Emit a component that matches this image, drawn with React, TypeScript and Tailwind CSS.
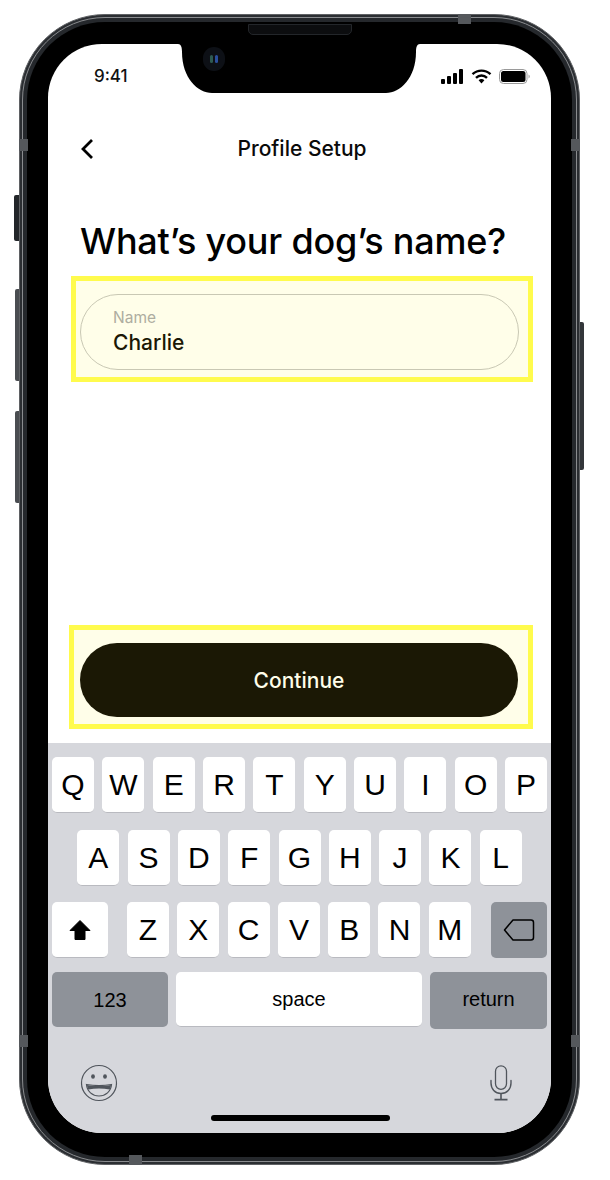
const FONT = "font-['Inter',sans-serif]";
const KEY_FONT = "font-['Liberation_Sans',Arial,sans-serif]";

const Key = ({ label }: { label: string }) => (
  <div className={`w-[42px] h-[56px] bg-white rounded-[5px] border-b border-[#b9bac0] flex items-center justify-center text-[30px] leading-none text-black ${KEY_FONT}`}>
    {label}
  </div>
);

const Tick = ({ className }: { className: string }) => (
  <div className={`absolute bg-[#55585c] ${className}`} />
);

const Notch = () => (
  <svg className="absolute left-[130px] top-0" width="242" height="50" viewBox="0 0 242 50">
    <path d="M0 0H242C239 0 238 3 238 8C238 34 222 49 208 49H34C20 49 4 34 4 8C4 3 3 0 0 0Z" fill="#000" />
  </svg>
);

const StatusIcons = () => (
  <div className="flex items-center gap-[7px]">
    <svg width="23" height="15" viewBox="0 0 23 15">
      <rect x="0" y="10" width="4" height="5" rx="1" fill="#000" />
      <rect x="6" y="7" width="4" height="8" rx="1" fill="#000" />
      <rect x="12" y="4" width="4" height="11" rx="1" fill="#000" />
      <rect x="18" y="0" width="4" height="15" rx="1" fill="#000" />
    </svg>
    <svg width="21" height="15" viewBox="0 0 21 15">
      <path d="M1.5 5.2C6.8 0.4 14.2 0.4 19.5 5.2" fill="none" stroke="#000" strokeWidth="2.4" />
      <path d="M5 8.8C8.2 5.8 12.8 5.8 16 8.8" fill="none" stroke="#000" strokeWidth="2.4" />
      <path d="M7.6 11.2C9.4 9.7 11.6 9.7 13.4 11.2L10.5 14.6Z" fill="#000" />
    </svg>
    <svg width="32" height="15" viewBox="0 0 32 15">
      <rect x="0.5" y="0.5" width="27.5" height="14" rx="4" fill="none" stroke="#9a9a9a" />
      <rect x="2" y="2" width="24.5" height="11" rx="2.5" fill="#000" />
      <path d="M29.5 5.5C30.6 6 30.8 6.7 30.8 7.5C30.8 8.3 30.6 9 29.5 9.5Z" fill="#a8a8a8" />
    </svg>
  </div>
);

const Emoji = () => (
  <svg width="38" height="38" viewBox="0 0 38 38">
    <circle cx="19" cy="19" r="17.5" fill="none" stroke="#50555c" strokeWidth="1.2" />
    <ellipse cx="13" cy="12.5" rx="1.9" ry="2.3" fill="#50555c" />
    <ellipse cx="25" cy="12.5" rx="1.9" ry="2.3" fill="#50555c" />
    <path d="M6.5 20.5C14 21.8 24 21.8 31.5 20.5C31 27.5 25.5 32 19 32C12.5 32 7 27.5 6.5 20.5Z" fill="#d6d7dc" stroke="#50555c" strokeWidth="1.2" />
    <path d="M7 21C14 22.2 24 22.2 31 21C30.8 23 30.3 24.4 29.6 25.5C23 24.2 15 24.2 8.4 25.5C7.7 24.4 7.2 23 7 21Z" fill="#50555c" />
  </svg>
);

const Mic = () => (
  <svg width="22" height="36" viewBox="0 0 22 36">
    <rect x="5.5" y="0.8" width="11" height="23.5" rx="5.5" fill="none" stroke="#50555c" strokeWidth="1.3" />
    <path d="M1 15.5V18C1 24 5 28.5 11 28.5C17 28.5 21 24 21 18V15.5" fill="none" stroke="#50555c" strokeWidth="1.4" strokeLinecap="round" />
    <path d="M11 28.5V34M4.5 34.6H17.5" fill="none" stroke="#50555c" strokeWidth="1.6" />
  </svg>
);

export default function App() {
  return (
    <div className="relative w-[610px] h-[1180px] bg-white pt-[14px] pl-[19px]">
      <div className="absolute left-[14px] top-[195px] w-[6px] h-[46px] rounded-l-[2px] bg-[#23262a]" />
      <div className="absolute left-[15px] top-[289px] w-[5px] h-[92px] rounded-l-[2px] bg-[#4a4d51]" />
      <div className="absolute left-[15px] top-[411px] w-[5px] h-[92px] rounded-l-[2px] bg-[#4a4d51]" />
      <div className="absolute left-[579px] top-[322px] w-[5px] h-[148px] rounded-r-[2px] bg-[#33363a]" />

      <div className="relative w-[561px] h-[1151px] rounded-[86px] border border-[#5f6164] bg-[#2b2e32] p-[2px]">
        <div className="w-full h-full rounded-[83px] border border-[#8a8c8f] bg-[#25282c] p-[4px]">
          <div className="w-full h-full rounded-[78px] bg-black pt-[22px] pl-[21px]">
            <div className={`relative w-[503px] h-[1089px] rounded-[54px] bg-white overflow-hidden flex flex-col ${FONT}`}>
              <Notch />
              <div className="absolute left-[155px] top-[3px] w-[22px] h-[24px] rounded-full bg-[#0d1016] flex items-center justify-center gap-[2px]">
                <span className="w-[3px] h-[8px] rounded-full bg-[#2e5a52]" />
                <span className="w-[3px] h-[8px] rounded-full bg-[#2b4f9e]" />
              </div>

              <div className="h-[48px] shrink-0 flex items-center justify-between pl-[46px] pr-[20px] pt-[16px]">
                <span className="text-[17px] font-medium text-[#111] leading-none">9:41</span>
                <StatusIcons />
              </div>

              <div className="relative h-[56px] mt-[28px] shrink-0 flex items-center justify-center pl-[5px]">
                <svg className="absolute left-[32px] top-[18px]" width="14" height="22" viewBox="0 0 14 22">
                  <path d="M12 2L3 11L12 20" fill="none" stroke="#000" strokeWidth="2.8" />
                </svg>
                <span className="text-[21px] font-medium text-[#0a0a0a] leading-none">Profile Setup</span>
              </div>

              <h1 className="mt-[43px] pl-[32px] text-[36px] tracking-[-0.2px] leading-[44px] font-medium text-black whitespace-nowrap">
                What’s your dog’s name?
              </h1>

              <div className="mt-[13px] ml-[23px] w-[462px] h-[106px] border-[5px] border-[#fffb4d] bg-[#fffee9] pl-[4px] pt-[13px]">
                <div className="w-[439px] h-[76px] rounded-full border border-[#c9c8b4] pl-[32px] pt-[2px] flex flex-col justify-center">
                  <span className="text-[15.5px] leading-[18px] text-[#aeada0]">Name</span>
                  <span className="mt-[2px] text-[21px] leading-[28px] font-medium text-[#1b1805]">Charlie</span>
                </div>
              </div>

              <div className="mt-[243px] ml-[21px] w-[464px] h-[104px] border-[5px] border-[#fffb4d] bg-[#fffee9] pl-[6px] pt-[13px]">
                <div className="w-[438px] h-[74px] rounded-full bg-[#1b1805] flex items-center justify-center pt-[1px] text-[21px] font-medium text-[#fffeea]">
                  Continue
                </div>
              </div>

              <div className="mt-[14px] flex-1 bg-[#d6d7dc] relative px-[4px] pt-[14px]">
                <div className="flex justify-between">
                  {['Q', 'W', 'E', 'R', 'T', 'Y', 'U', 'I', 'O', 'P'].map(k => (
                    <Key key={k} label={k} />
                  ))}
                </div>
                <div className="mt-[17px] flex justify-center gap-[8.3px]">
                  {['A', 'S', 'D', 'F', 'G', 'H', 'J', 'K', 'L'].map(k => (
                    <Key key={k} label={k} />
                  ))}
                </div>
                <div className="mt-[16px] flex">
                  <div className="w-[56px] h-[56px] bg-white rounded-[5px] border-b border-[#b9bac0] flex items-center justify-center">
                    <svg width="22" height="22" viewBox="0 0 22 22">
                      <path d="M11 1.5L21 11.5H16V20.5H6V11.5H1Z" fill="#000" stroke="#000" strokeLinejoin="round" />
                    </svg>
                  </div>
                  <div className="ml-[19px] flex gap-[8.3px]">
                    {['Z', 'X', 'C', 'V', 'B', 'N', 'M'].map(k => (
                      <Key key={k} label={k} />
                    ))}
                  </div>
                  <div className="ml-auto w-[56px] h-[56px] bg-[#8e9299] rounded-[5px] flex items-center justify-center">
                    <svg width="32" height="24" viewBox="0 0 32 24">
                      <path d="M10 2H28C29.5 2 30.5 3 30.5 4.5V19.5C30.5 21 29.5 22 28 22H10L1.5 12Z" fill="none" stroke="#000" strokeWidth="1.5" strokeLinejoin="round" />
                    </svg>
                  </div>
                </div>
                <div className={`mt-[14px] flex gap-[8px] text-[20px] text-black ${KEY_FONT}`}>
                  <div className="w-[116px] h-[55px] bg-[#8e9299] rounded-[5px] flex items-center justify-center">123</div>
                  <div className="w-[246px] h-[55px] bg-white rounded-[5px] border-b border-[#b9bac0] flex items-center justify-center">space</div>
                  <div className="w-[117px] h-[57px] bg-[#8e9299] rounded-[5px] flex items-center justify-center pb-[4px]">return</div>
                </div>
                <div className="mt-[35px] pl-[28px] pr-[35px] flex items-center justify-between">
                  <Emoji />
                  <Mic />
                </div>
                <div className="absolute left-[163px] bottom-[12px] w-[179px] h-[6px] rounded-full bg-black" />
              </div>
            </div>
          </div>
        </div>
        <div className="absolute left-[228px] top-[9px] w-[104px] h-[11px] rounded-b-[5px] border border-[#23262a] bg-[#0c0d0f]" />
        <Tick className="left-[438px] top-[-1px] w-[13px] h-[10px]" />
        <Tick className="left-[-1px] top-[124px] w-[9px] h-[12px]" />
        <Tick className="right-[-1px] top-[124px] w-[9px] h-[12px]" />
        <Tick className="left-[-1px] top-[1020px] w-[9px] h-[12px]" />
        <Tick className="right-[-1px] top-[1020px] w-[9px] h-[12px]" />
        <Tick className="left-[109px] bottom-[-1px] w-[13px] h-[10px]" />
      </div>
    </div>
  );
}
